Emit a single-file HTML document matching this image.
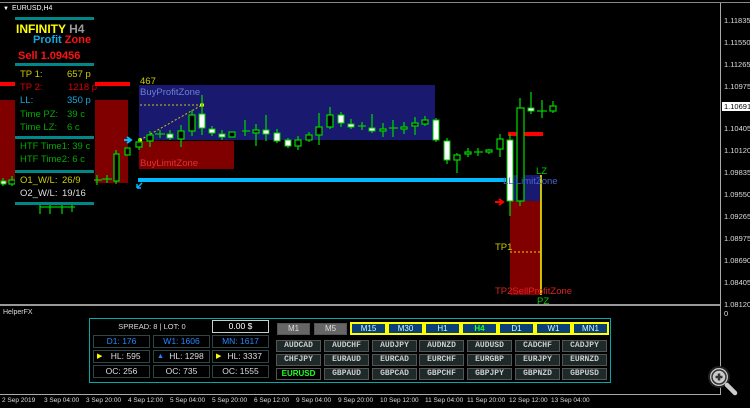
<!DOCTYPE html>
<html><head><meta charset="utf-8"><style>
*{margin:0;padding:0;box-sizing:border-box}
body{width:750px;height:408px;background:#000;position:relative;overflow:hidden;font-family:"Liberation Sans",sans-serif}
.a{position:absolute;white-space:nowrap}
.t{font-size:9.5px}
.ax{font-size:7.5px;color:#ddd;left:724px}
.bt{position:absolute;height:12px;border:1px solid #555;background:#666;color:#ddd;font-size:8px;text-align:center;line-height:10px}
.tf{position:absolute;height:13px;border:2px solid #ff0;background:#0b3f7a;color:#cfe;font-size:8px;text-align:center;line-height:9px}
.sy{position:absolute;width:45px;height:12px;border:1px solid #555;background:#1e2a2a;color:#ccc;font-family:"Liberation Mono",monospace;font-size:8px;font-weight:bold;text-align:center;line-height:10px}
.cl{position:absolute;height:13px;border:1px solid #2e4545;background:#000;font-size:8.5px;text-align:center;line-height:11px;color:#ddd}
.tm{position:absolute;top:397px;font-size:6.5px;color:#ddd}
</style></head><body>
<div class="a" style="left:0;top:2px;width:750px;height:1px;background:#888"></div>
<div class="a" style="left:720px;top:3px;width:1px;height:392px;background:#aaa"></div>
<div class="a" style="left:0;top:304px;width:720px;height:2px;background:#999"></div>
<div class="a" style="left:0;top:394px;width:721px;height:1px;background:#aaa"></div>
<div class="a" style="left:3px;top:6px;font-size:6px;color:#fff">▼</div>
<div class="a" style="left:12px;top:5px;font-size:7px;color:#fff">EURUSD,H4</div>
<div class="a" style="left:3px;top:309px;font-size:7px;color:#ddd">HelperFX</div>

<div class="a ax" style="top:16px">1.11835</div>
<div class="a ax" style="top:38px">1.11550</div>
<div class="a ax" style="top:60px">1.11265</div>
<div class="a ax" style="top:82px">1.10975</div>
<div class="a ax" style="top:102px;left:722px;background:#fff;color:#000;padding:0 2px">1.10691</div>
<div class="a ax" style="top:124px">1.10405</div>
<div class="a ax" style="top:146px">1.10120</div>
<div class="a ax" style="top:168px">1.09835</div>
<div class="a ax" style="top:190px">1.09550</div>
<div class="a ax" style="top:212px">1.09265</div>
<div class="a ax" style="top:234px">1.08975</div>
<div class="a ax" style="top:256px">1.08690</div>
<div class="a ax" style="top:278px">1.08405</div>
<div class="a ax" style="top:300px">1.08120</div>
<div class="a ax" style="top:309px">0</div>

<svg class="a" style="left:0;top:0" width="720" height="304">
<rect x="0" y="100" width="15" height="83" fill="#800000"/>
<rect x="95" y="100" width="33" height="83" fill="#800000"/>
<rect x="0" y="82" width="15" height="4" fill="#f00"/>
<rect x="95" y="82" width="35" height="4" fill="#f00"/>
<rect x="139" y="85" width="296" height="55" fill="#191970"/>
<rect x="139" y="141" width="95" height="28" fill="#800000"/>
<rect x="510" y="175" width="31" height="26" fill="#191970"/>
<rect x="510" y="201" width="31" height="94" fill="#800000"/>
<line x1="541" y1="175" x2="541" y2="295" stroke="#ff0" stroke-width="1.5"/>
<line x1="510" y1="252" x2="541" y2="252" stroke="#fc0" stroke-dasharray="2,2"/>
<line x1="140" y1="105" x2="202" y2="105" stroke="#cc0" stroke-dasharray="2,2"/>
<line x1="140" y1="140" x2="202" y2="105" stroke="#cc0" stroke-dasharray="2,2"/>
<circle cx="202" cy="105" r="2" fill="#ff0"/><circle cx="140" cy="140" r="2" fill="#ff0"/>
<rect x="138" y="178" width="368" height="4" fill="#0bf"/>
<rect x="508" y="132" width="35" height="4" fill="#f00"/>
<path d="M124 140h6M127 137l4 3-4 3" stroke="#0bf" stroke-width="2" fill="none"/>
<path d="M495 202h7M499 199l4 3-4 3" stroke="#f00" stroke-width="2" fill="none"/>
<path d="M137 188l5-5M137 188v-4M137 188h4" stroke="#0bf" stroke-width="1.5" fill="none"/>
<g stroke="#0c0" stroke-width="1.3" fill="#000">
<path d="M3 178v8M12 176v10M40 204v10M50 204v10M62 204v10M72 204v8M97 175v10M107 175v8M116 150v34M139 138v12M150 131v16M160 130v8M170 130v10M181 125v22M192 110v26M202 95v40M212 126v10M222 130v10M245 120v16M256 124v22M266 115v26M277 129v14M288 138v10M298 136v14M309 132v10M319 113v32M330 107v22M341 112v15M351 119v10M362 122v8M372 114v19M383 123v14M393 120v17M404 122v12M415 117v18M425 116v10M436 118v24M447 138v26M457 153v20M468 148v9M478 148v8M489 149v5M500 134v23M510 134v82M520 98v108M531 92v22M542 100v18M553 101v12"/>
<path d="M92 180h10M102 179h10M155 134h10M40 207h35M389 128h9M474 152h9M537 111h10M242 131h8M358 126h8" />
<rect x="114" y="154" width="5" height="27"/><rect x="125" y="148" width="5" height="7"/><rect x="136" y="142" width="6" height="5"/><rect x="147" y="135" width="6" height="6"/><rect x="178" y="131" width="6" height="8"/><rect x="189" y="115" width="6" height="16"/><rect x="229" y="132" width="6" height="5"/><rect x="253" y="130" width="6" height="3"/><rect x="295" y="140" width="6" height="6"/><rect x="306" y="135" width="6" height="5"/><rect x="316" y="127" width="6" height="8"/><rect x="327" y="115" width="6" height="12"/><rect x="380" y="129" width="6" height="2"/><rect x="401" y="127" width="6" height="2"/><rect x="412" y="123" width="6" height="3"/><rect x="422" y="120" width="6" height="4"/><rect x="454" y="155" width="6" height="5"/><rect x="465" y="152" width="6" height="2"/><rect x="486" y="150" width="6" height="2"/><rect x="497" y="139" width="6" height="10"/><rect x="517" y="108" width="7" height="93"/><rect x="550" y="106" width="6" height="5"/><rect x="9" y="180" width="6" height="4"/>
</g>
<g stroke="#0c0" stroke-width="1" fill="#fff">
<rect x="1" y="181" width="5" height="3"/><rect x="167" y="134" width="6" height="4"/><rect x="199" y="114" width="6" height="14"/><rect x="209" y="129" width="6" height="4"/><rect x="219" y="134" width="6" height="3"/><rect x="263" y="130" width="6" height="4"/><rect x="274" y="133" width="6" height="8"/><rect x="285" y="140" width="6" height="6"/><rect x="338" y="115" width="6" height="8"/><rect x="348" y="124" width="6" height="3"/><rect x="369" y="128" width="6" height="3"/><rect x="433" y="120" width="6" height="20"/><rect x="444" y="141" width="6" height="19"/><rect x="507" y="140" width="6" height="61"/><rect x="528" y="108" width="6" height="3"/>
</g>
</svg>

<div class="a t" style="left:140px;top:76px;color:#cc0">467</div>
<div class="a t" style="left:140px;top:87px;color:#6f7fd0">BuyProfitZone</div>
<div class="a t" style="left:140px;top:158px;color:#d33">BuyLimitZone</div>
<div class="a t" style="left:536px;top:166px;color:#0c0">LZ</div>
<div class="a t" style="left:503px;top:176px;color:#46c">LL  LimitZone</div>
<div class="a t" style="left:495px;top:242px;color:#cc0">TP1</div>
<div class="a t" style="left:495px;top:286px;color:#d22">TP2SellProfitZone</div>
<div class="a t" style="left:537px;top:296px;color:#0c0">PZ</div>

<div class="a" style="left:15px;top:17px;width:79px;height:3px;background:#088"></div>
<div class="a" style="left:16px;top:22px;font-size:12px;font-weight:bold;color:#ff0">INFINITY <span style="color:#999">H4</span></div>
<div class="a" style="left:33px;top:34px;font-size:11px;font-weight:bold;color:#1ad">Profit <span style="color:#f11">Zone</span></div>
<div class="a" style="left:18px;top:50px;font-size:11px;font-weight:bold;color:#f11">Sell 1.09456</div>
<div class="a" style="left:15px;top:63px;width:79px;height:3px;background:#088"></div>
<div class="a" style="left:15px;top:66px;width:79px;height:137px;background:#000"></div>
<div class="a t" style="left:20px;top:69px;color:#cc0">TP 1:</div><div class="a t" style="left:67px;top:69px;color:#cc0">657 p</div>
<div class="a t" style="left:20px;top:82px;color:#d00">TP 2:</div><div class="a t" style="left:68px;top:82px;color:#d00">1218 p</div>
<div class="a t" style="left:20px;top:95px;color:#1ad">LL:</div><div class="a t" style="left:67px;top:95px;color:#1ad">350 p</div>
<div class="a t" style="left:20px;top:109px;color:#0a0">Time PZ:</div><div class="a t" style="left:67px;top:109px;color:#0a0">39 c</div>
<div class="a t" style="left:20px;top:122px;color:#0a0">Time LZ:</div><div class="a t" style="left:67px;top:122px;color:#0a0">6 c</div>
<div class="a" style="left:15px;top:136px;width:79px;height:3px;background:#088"></div>
<div class="a t" style="left:20px;top:141px;color:#0a0">HTF Time1: 39 c</div>
<div class="a t" style="left:20px;top:154px;color:#0a0">HTF Time2: 6 c</div>
<div class="a" style="left:15px;top:170px;width:79px;height:3px;background:#088"></div>
<div class="a t" style="left:20px;top:175px;color:#cc0">O1_W/L:</div><div class="a t" style="left:62px;top:175px;color:#cc0">26/9</div>
<div class="a t" style="left:20px;top:188px;color:#ddd">O2_W/L:</div><div class="a t" style="left:62px;top:188px;color:#ddd">19/16</div>
<div class="a" style="left:15px;top:202px;width:79px;height:3px;background:#088"></div>

<div class="a" style="left:89px;top:318px;width:522px;height:65px;border:1px solid #0aa"></div>
<div class="a" style="left:92px;top:322px;width:120px;text-align:center;font-size:7.5px;color:#ddd">SPREAD: 8 | LOT: 0</div>
<div class="cl" style="left:212px;top:320px;width:57px;border:1px solid #ccc;color:#fff">0.00 $</div>
<div class="cl" style="left:93px;top:335px;width:57px;color:#28f">D1: 176</div>
<div class="cl" style="left:153px;top:335px;width:57px;color:#28f">W1: 1606</div>
<div class="cl" style="left:212px;top:335px;width:57px;color:#28f">MN: 1617</div>
<div class="cl" style="left:93px;top:350px;width:57px"><span style="color:#ff0;float:left;margin-left:3px;font-size:7px">▶</span>HL: 595</div>
<div class="cl" style="left:153px;top:350px;width:57px"><span style="color:#28f;float:left;margin-left:3px;font-size:7px">▲</span>HL: 1298</div>
<div class="cl" style="left:212px;top:350px;width:57px"><span style="color:#ff0;float:left;margin-left:3px;font-size:7px">▶</span>HL: 3337</div>
<div class="cl" style="left:93px;top:365px;width:57px">OC: 256</div>
<div class="cl" style="left:153px;top:365px;width:57px">OC: 735</div>
<div class="cl" style="left:212px;top:365px;width:57px">OC: 1555</div>

<div class="bt" style="left:277px;top:323px;width:33px">M1</div>
<div class="bt" style="left:314px;top:323px;width:33px">M5</div>
<div class="tf" style="left:350px;top:322px;width:37px">M15</div>
<div class="tf" style="left:387px;top:322px;width:37px">M30</div>
<div class="tf" style="left:424px;top:322px;width:37px">H1</div>
<div class="tf" style="left:461px;top:322px;width:37px;color:#2f2;font-weight:bold">H4</div>
<div class="tf" style="left:498px;top:322px;width:37px">D1</div>
<div class="tf" style="left:535px;top:322px;width:37px">W1</div>
<div class="tf" style="left:572px;top:322px;width:37px">MN1</div>

<div class="sy" style="left:276px;top:340px">AUDCAD</div><div class="sy" style="left:324px;top:340px">AUDCHF</div><div class="sy" style="left:372px;top:340px">AUDJPY</div><div class="sy" style="left:419px;top:340px">AUDNZD</div><div class="sy" style="left:467px;top:340px">AUDUSD</div><div class="sy" style="left:515px;top:340px">CADCHF</div><div class="sy" style="left:562px;top:340px">CADJPY</div>
<div class="sy" style="left:276px;top:354px">CHFJPY</div><div class="sy" style="left:324px;top:354px">EURAUD</div><div class="sy" style="left:372px;top:354px">EURCAD</div><div class="sy" style="left:419px;top:354px">EURCHF</div><div class="sy" style="left:467px;top:354px">EURGBP</div><div class="sy" style="left:515px;top:354px">EURJPY</div><div class="sy" style="left:562px;top:354px">EURNZD</div>
<div class="sy" style="left:276px;top:368px;color:#2f2;background:#000;font-family:'Liberation Sans',sans-serif">EURUSD</div><div class="sy" style="left:324px;top:368px">GBPAUD</div><div class="sy" style="left:372px;top:368px">GBPCAD</div><div class="sy" style="left:419px;top:368px">GBPCHF</div><div class="sy" style="left:467px;top:368px">GBPJPY</div><div class="sy" style="left:515px;top:368px">GBPNZD</div><div class="sy" style="left:562px;top:368px">GBPUSD</div>

<svg class="a" style="left:706px;top:364px" width="34" height="34"><circle cx="13" cy="13" r="10" fill="#ccc" stroke="#222" stroke-width="2"/><circle cx="13" cy="13" r="7" fill="#ccc" stroke="#333" stroke-width="1.5"/><path d="M9.5 13h7M13 9.5v7" stroke="#333" stroke-width="2.5"/><path d="M21 21l8 8" stroke="#ccc" stroke-width="4.5" stroke-linecap="round"/></svg>

<div class="tm" style="left:2px">2 Sep 2019</div><div class="tm" style="left:44px">3 Sep 04:00</div><div class="tm" style="left:86px">3 Sep 20:00</div><div class="tm" style="left:128px">4 Sep 12:00</div><div class="tm" style="left:170px">5 Sep 04:00</div><div class="tm" style="left:212px">5 Sep 20:00</div><div class="tm" style="left:254px">6 Sep 12:00</div><div class="tm" style="left:296px">9 Sep 04:00</div><div class="tm" style="left:338px">9 Sep 20:00</div><div class="tm" style="left:380px">10 Sep 12:00</div><div class="tm" style="left:425px">11 Sep 04:00</div><div class="tm" style="left:467px">11 Sep 20:00</div><div class="tm" style="left:509px">12 Sep 12:00</div><div class="tm" style="left:551px">13 Sep 04:00</div>
</body></html>
